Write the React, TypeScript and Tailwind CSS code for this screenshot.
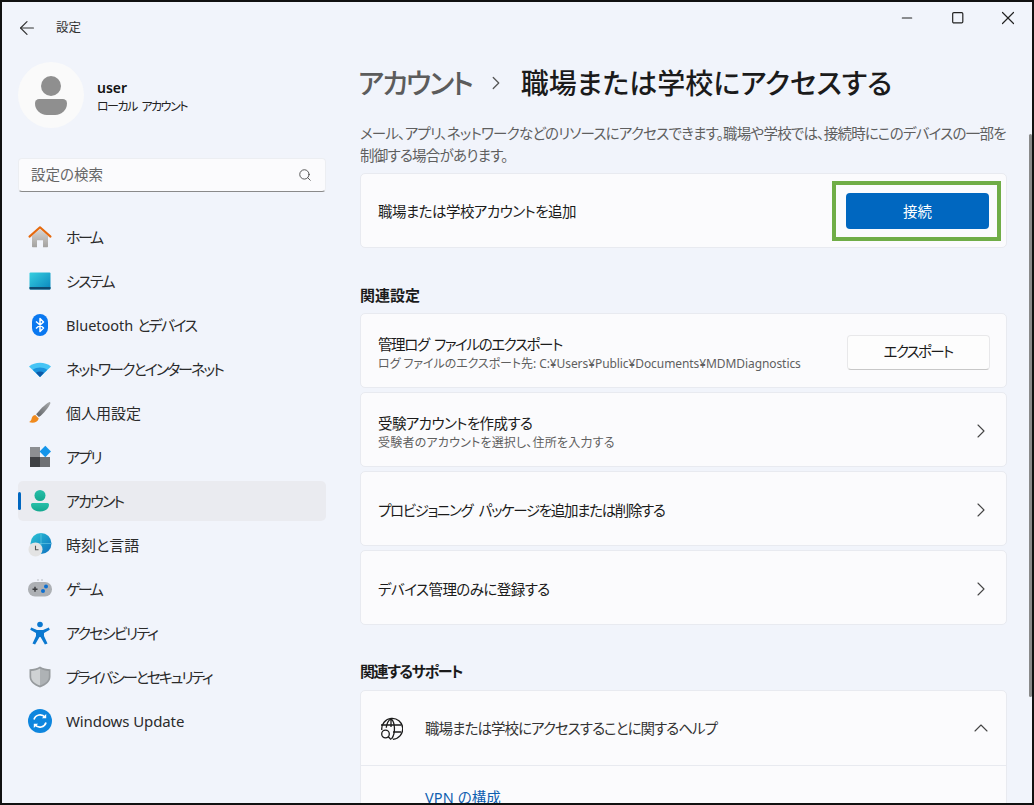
import { ReactNode } from "react"
import { ChevronRight, ChevronUp, Search, ArrowLeft, Minus, Square, X } from "lucide-react"

function HomeIcon() {
  return (
    <svg viewBox="0 0 24 24" className="w-[24px] h-[24px]">
      <defs>
        <linearGradient id="homeBody" x1="0" y1="0" x2="0" y2="1">
          <stop offset="0" stopColor="#d8d6d3" />
          <stop offset="1" stopColor="#a3a19f" />
        </linearGradient>
      </defs>
      <path d="M4 11 12 4l8 7v10.5a.7.7 0 0 1-.7.7H15v-7H9v7H4.700a.7.7 0 0 1-.7-.7z" fill="url(#homeBody)" />
      <path d="M1.500 11.600 12 2.300l10.500 9.300" fill="none" stroke="#e5690d" strokeWidth="2.100" strokeLinecap="round" strokeLinejoin="round" />
    </svg>
  )
}

function SystemIcon() {
  return (
    <svg viewBox="0 0 24 24" className="w-[24px] h-[24px]">
      <defs>
        <linearGradient id="sysScreen" x1="0" y1="0" x2="1" y2="1">
          <stop offset="0" stopColor="#36cfe0" />
          <stop offset="1" stopColor="#0a86bd" />
        </linearGradient>
      </defs>
      <rect x="1.500" y="3.500" width="21" height="17" rx="1" fill="url(#sysScreen)" />
      <path d="M1.500 18h21v1.800a.8.8 0 0 1-.8.8H2.300a.8.8 0 0 1-.8-.8z" fill="#0d4a70" />
    </svg>
  )
}

function BluetoothIcon() {
  return (
    <svg viewBox="0 0 24 24" className="w-[24px] h-[24px]">
      <rect x="4" y="1" width="16" height="22" rx="8" fill="#0a78f0" />
      <path d="M8 8.500 15.500 15 12 18.500v-13L15.500 9 8 15.500" fill="none" stroke="#fff" strokeWidth="1.500" strokeLinejoin="round" />
    </svg>
  )
}

function WifiIcon() {
  return (
    <svg viewBox="0 0 24 24" className="w-[24px] h-[24px]">
      <path d="M1 9.500C7 4.500 17 4.500 23 9.500L12 20z" fill="#46c4f5" />
      <path d="M4.700 12.800C9 9.600 15 9.600 19.300 12.800L12 20z" fill="#1b93dd" />
      <path d="M8 15.700c2.500-1.500 5.500-1.500 8 0L12 20z" fill="#0f5aa8" />
    </svg>
  )
}

function BrushIcon() {
  return (
    <svg viewBox="0 0 24 24" className="w-[24px] h-[24px]">
      <defs>
        <linearGradient id="brushHandle" x1="0" y1="1" x2="1" y2="0">
          <stop offset="0" stopColor="#5d6064" />
          <stop offset="1" stopColor="#a9abad" />
        </linearGradient>
      </defs>
      <path d="M21 1.200c.9-.4 1.600.3 1.300 1.200-1.500 3.600-6.500 10-11.400 13.600l-2.800-2.700C11.500 9 17.400 3 21 1.200z" fill="url(#brushHandle)" />
      <path d="M7.300 14c-2.800.4-3.400 2.300-3.800 4-.3 1.300-1.100 2.300-2.500 3 3.200 1.500 8.300 1.100 9.800-3.400z" fill="#f08a1d" />
    </svg>
  )
}

function AppsIcon() {
  return (
    <svg viewBox="0 0 24 24" className="w-[24px] h-[24px]">
      <rect x="2" y="2" width="10" height="10" fill="#8d8f92" />
      <rect x="2" y="12" width="10" height="10" fill="#3f4144" />
      <rect x="12" y="12" width="10" height="10" fill="#6f7174" />
      <path d="M17.300 .8 23 6.500l-5.700 5.700-5.700-5.700z" fill="#1495ea" />
    </svg>
  )
}

function AccountIcon() {
  return (
    <svg viewBox="0 0 24 24" className="w-[24px] h-[24px]">
      <defs>
        <linearGradient id="acctFill" x1="0" y1="0" x2="0" y2="1">
          <stop offset="0" stopColor="#27bfa9" />
          <stop offset="1" stopColor="#14a88f" />
        </linearGradient>
      </defs>
      <circle cx="12" cy="6.500" r="5.500" fill="url(#acctFill)" />
      <path d="M4.500 14h15a1.500 1.500 0 0 1 1.500 1.500c0 4-3.500 7-9 7s-9-3-9-7A1.500 1.500 0 0 1 4.500 14z" fill="url(#acctFill)" />
    </svg>
  )
}

function TimeIcon() {
  return (
    <svg viewBox="0 0 24 24" className="w-[24px] h-[24px]">
      <defs>
        <linearGradient id="globeFill" x1="0" y1="0" x2="1" y2="1">
          <stop offset="0" stopColor="#2cc5d5" />
          <stop offset="1" stopColor="#0d6fc0" />
        </linearGradient>
      </defs>
      <circle cx="13" cy="10.500" r="10.500" fill="url(#globeFill)" />
      <path d="M13 0v21M2.500 10.500h21" stroke="#7fd6ec" strokeWidth=".5" />
      <circle cx="7.500" cy="16.500" r="7" fill="#e3e3e3" />
      <path d="M7.500 12.800v4h3" fill="none" stroke="#555" strokeWidth="1.100" />
    </svg>
  )
}

function GameIcon() {
  return (
    <svg viewBox="0 0 24 24" className="w-[24px] h-[24px]">
      <rect x="0" y="5" width="24" height="14.500" rx="7" fill="#adb0b4" />
      <path d="M4.500 12.200h5M7 9.700v5" stroke="#3c3d40" strokeWidth="1.500" />
      <circle cx="18" cy="9.500" r="2" fill="#0d6fd0" />
      <circle cx="15" cy="14" r="2" fill="#0d6fd0" />
      <path d="M9.500 3h1M13.500 3h1" stroke="#8a8c8e" strokeWidth="1" />
    </svg>
  )
}

function AccessIcon() {
  return (
    <svg viewBox="0 0 24 24" className="w-[24px] h-[24px]">
      <circle cx="12" cy="3.500" r="2.800" fill="#0b78d0" />
      <path d="M3.200 6.500 9 9h6l5.800-2.500 1 2.300L16 12v3l3.500 7.500-2.600 1L12.500 16h-1l-4.400 7.500-2.600-1L8 15v-3L2.200 8.800z" fill="#0b78d0" />
    </svg>
  )
}

function ShieldIcon() {
  return (
    <svg viewBox="0 0 24 24" className="w-[24px] h-[24px]">
      <path d="M12 1.500c3 1.800 6.500 2.700 10.500 2.800v7.200c0 5-4 8.800-10.500 11C5.500 20.300 1.500 16.500 1.500 11.500V4.300C5.500 4.200 9 3.300 12 1.500z" fill="#979b9e" />
      <path d="M12 3.500c2.500 1.500 5.500 2.200 8.800 2.400v5.600c0 4-3 7-8.800 9z" fill="#aeb2b5" />
      <path d="M12 3.500C9.500 5 6.500 5.700 3.200 5.900v5.600c0 4 3 7 8.800 9z" fill="#cfd2d4" />
    </svg>
  )
}

function UpdateIcon() {
  return (
    <svg viewBox="0 0 24 24" className="w-[24px] h-[24px]">
      <circle cx="12" cy="12" r="12" fill="#0e86de" />
      <path d="M6 10.500a6.300 6.300 0 0 1 11-2.200M18 13.500a6.300 6.300 0 0 1-11 2.200" fill="none" stroke="#fff" strokeWidth="1.700" />
      <path d="M18.200 5v4.300h-4.300zM5.800 19v-4.300h4.300z" fill="#fff" />
    </svg>
  )
}

function HelpGlobeIcon() {
  return (
    <svg viewBox="0 0 24 24" className="w-[24px] h-[24px]" fill="none" stroke="#1b1b1b" strokeWidth="1.300">
      <path d="M2.800 13A10.500 10.500 0 1 1 14 22.300" />
      <path d="M2 8h20M12 1.800V10M12 1.800c-3 2-4.500 5-4.700 9M12 1.800c4 3 5 14 .5 20.300M14 15h8.300" />
      <circle cx="6.500" cy="17" r="3.800" />
      <path d="m9.300 19.800 2.700 2.700" />
    </svg>
  )
}

const navItems: { label: ReactNode; key: string; icon: ReactNode; track?: string; active?: boolean }[] = [
  { key: "home", label: "ホーム", icon: <HomeIcon />, track: "tracking-[-2.4px]" },
  { key: "system", label: "システム", icon: <SystemIcon />, track: "tracking-[-1.7px]" },
  {
    key: "bluetooth",
    label: (
      <>
        <span className="text-[14.5px]">Bluetooth </span>
        <span className="tracking-[-1.7px]">とデバイス</span>
      </>
    ),
    icon: <BluetoothIcon />,
  },
  { key: "network", label: "ネットワークとインターネット", icon: <WifiIcon />, track: "tracking-[-2px]" },
  { key: "personal", label: "個人用設定", icon: <BrushIcon /> },
  { key: "apps", label: "アプリ", icon: <AppsIcon />, track: "tracking-[-1.7px]" },
  { key: "account", label: "アカウント", icon: <AccountIcon />, track: "tracking-[-1.8px]", active: true },
  { key: "time", label: "時刻と言語", icon: <TimeIcon /> },
  { key: "game", label: "ゲーム", icon: <GameIcon />, track: "tracking-[-2.6px]" },
  { key: "access", label: "アクセシビリティ", icon: <AccessIcon />, track: "tracking-[-1.75px]" },
  { key: "privacy", label: "プライバシーとセキュリティ", icon: <ShieldIcon />, track: "tracking-[-2.15px]" },
  { key: "update", label: "Windows Update", icon: <UpdateIcon />, track: "tracking-[-0.1px]" },
]

function Card({ children }: { children: ReactNode }) {
  return (
    <div className="h-[75px] shrink-0 flex items-center justify-between pl-[17px] pr-[18px] bg-[#fbfbfd] border border-[#e8eaf0] rounded-[5px]">
      {children}
    </div>
  )
}

function LinkRow({ title, track, sub, subTrack }: { title: string; track: string; sub?: string; subTrack?: string }) {
  return (
    <Card>
      <div className={sub ? "mt-[4px]" : "mt-[2px]"}>
        <div className={`text-[14.5px] leading-[20px] text-[#1b1b1b] ${track}`}>{title}</div>
        {sub && <div className={`mt-[2px] text-[12px] leading-[16px] text-[#5f5f5f] ${subTrack}`}>{sub}</div>}
      </div>
      <ChevronRight className="w-[24px] h-[24px] text-[#444] mr-[-5px] mt-[2px]" strokeWidth={1.1} />
    </Card>
  )
}

export default function App() {
  return (
    <div className="relative w-[1034px] h-[805px] overflow-hidden flex bg-[#f1f4fb] border-2 border-[#111] font-['Noto_Sans','Noto_Sans_CJK_JP',sans-serif] [font-feature-settings:'palt']">
      {/* Sidebar */}
      <aside className="w-[358px] shrink-0 pl-[16px] pr-[34px]">
        <div className="h-[52px] flex items-center">
          <ArrowLeft className="w-[22px] h-[22px] text-[#333] ml-[-2.5px]" strokeWidth={1.3} />
          <span className="ml-[18.5px] text-[12.5px] text-[#333]">設定</span>
        </div>

        <div className="mt-[8px] flex items-center">
          <div className="w-[66px] h-[66px] rounded-full bg-[#fafafa] flex flex-col items-center justify-center">
            <div className="w-[20px] h-[20px] rounded-full bg-[#8f8f8f]" />
            <div className="w-[32px] h-[16px] mt-[3px] rounded-t-[5px] rounded-b-[14px] bg-[#8f8f8f]" />
          </div>
          <div className="ml-[13px] mt-[5px]">
            <div className="text-[14px] leading-[18px] font-semibold text-[#111]">user</div>
            <div className="text-[12px] leading-[20px] text-[#222] tracking-[-1.5px] [word-spacing:3px]">ローカル アカウント</div>
          </div>
        </div>

        <div className="mt-[30px] h-[34px] flex items-center justify-between pl-[12px] pr-[13px] bg-[#fbfbfd] border border-[#eceef2] border-b-[#8a8a8a] rounded-[4px]">
          <span className="text-[14.5px] text-[#666]">設定の検索</span>
          <Search className="w-[14px] h-[14px] text-[#444]" strokeWidth={1.5} />
        </div>

        <nav className="mt-[25px] flex flex-col gap-[4px]">
          {navItems.map(item => (
            <div
              key={item.key}
              className={`relative h-[40px] flex items-center pl-[10px] rounded-[5px] ${item.active ? "bg-[#eaebf0]" : ""}`}
            >
              {item.active && (
                <div className="absolute left-0 top-[11px] w-[3px] h-[18px] rounded-full bg-[#0067c0]" />
              )}
              <span className="w-[24px] h-[24px] flex items-center justify-center">{item.icon}</span>
              <span className={`ml-[14px] text-[15px] text-[#2b2b2b] ${item.track ?? ""}`}>{item.label}</span>
            </div>
          ))}
        </nav>
      </aside>

      {/* Main */}
      <main className="flex-1 min-w-0 pr-[25px]">
        <div className="h-[32px] flex items-center justify-end text-[#222] mr-[-25px]">
          <div className="w-[50px] flex justify-center"><Minus className="w-[16px] h-[16px]" strokeWidth={1.8} /></div>
          <div className="w-[50px] flex justify-center"><Square className="w-[13.5px] h-[13.5px] ml-[2px]" strokeWidth={2.1} /></div>
          <div className="w-[50px] flex justify-center"><X className="w-[22px] h-[22px] ml-[2px]" strokeWidth={1.3} /></div>
        </div>

        <h1 className="mt-[29px] h-[40px] flex items-center text-[28px] leading-[40px] font-medium text-[#1b1b1b]">
          <span className="ml-[-2px] text-[#5c5c5c] tracking-[-2px]">アカウント</span>
          <ChevronRight className="w-[22px] h-[22px] mx-[13.5px] text-[#555]" strokeWidth={1.4} />
          <span>職場または学校にアクセスする</span>
        </h1>

        <p className="mt-[19px] text-[14.5px] leading-[22px] text-[#5f5f5f] tracking-[-0.76px]">
          メール、アプリ、ネットワークなどのリソースにアクセスできます。職場や学校では、接続時にこのデバイスの一部を制御する場合があります。
        </p>

        <div className="mt-[7px]">
          <Card>
            <span className="mt-[2px] text-[14.5px] text-[#1b1b1b] tracking-[-0.55px]">職場または学校アカウントを追加</span>
            <div className="border-[4px] border-[#70ad47] mr-[-13px] mt-[1px] pl-[10px] pr-[8px] py-[8px]">
              <div className="w-[143px] h-[36px] pt-[2px] flex items-center justify-center rounded-[4px] bg-[#0067c0] text-[14.5px] text-white">
                接続
              </div>
            </div>
          </Card>
        </div>

        <h2 className="mt-[37px] h-[20px] text-[15px] leading-[20px] font-semibold text-[#1b1b1b]">関連設定</h2>
        <div className="mt-[8px] flex flex-col gap-[4.1px]">
          <Card>
            <div className="mt-[4px]">
              <div className="text-[14.5px] leading-[20px] text-[#1b1b1b] tracking-[-1.4px] [word-spacing:3px]">管理ログ ファイルのエクスポート</div>
              <div className="mt-[2px] text-[12px] leading-[16px] text-[#5f5f5f] tracking-[-0.08px]">ログ ファイルのエクスポート先: C:¥Users¥Public¥Documents¥MDMDiagnostics</div>
            </div>
            <div className="w-[143px] h-[35px] mr-[-1.5px] mt-[3px] flex items-center justify-center rounded-[4px] bg-[#fdfdfd] border border-[#e8e8ea] border-b-[#c8c8c8] text-[14.5px] text-[#1b1b1b] tracking-[-1.7px]">
              エクスポート
            </div>
          </Card>
          <LinkRow
            title="受験アカウントを作成する"
            track="tracking-[-0.6px]"
            sub="受験者のアカウントを選択し、住所を入力する"
            subTrack="tracking-[0.2px]"
          />
          <LinkRow title="プロビジョニング パッケージを追加または削除する" track="tracking-[-1.35px] [word-spacing:4px]" />
          <LinkRow title="デバイス管理のみに登録する" track="tracking-[-0.55px]" />
        </div>

        <h2 className="mt-[36px] h-[20px] text-[15px] leading-[20px] font-semibold text-[#1b1b1b] tracking-[-1.4px]">関連するサポート</h2>
        <div className="mt-[9px] bg-[#fbfbfd] border border-[#e8eaf0] rounded-[5px]">
          <div className="h-[75px] flex items-center justify-between pl-[18px] pr-[18px] border-b border-[#e8eaf0]">
            <div className="flex items-center mt-[2px]">
              <HelpGlobeIcon />
              <span className="ml-[22px] text-[14.5px] text-[#333] tracking-[-0.95px]">職場または学校にアクセスすることに関するヘルプ</span>
            </div>
            <ChevronUp className="w-[24px] h-[24px] text-[#444] mr-[-5px]" strokeWidth={1.1} />
          </div>
          <div className="h-[60px] pt-[20px] pl-[64px] text-[14.5px] leading-[22px] text-[#0f5fb0] tracking-[0.1px]">VPN の構成</div>
        </div>
      </main>

      {/* Scrollbar thumb */}
      <div className="absolute right-[0.5px] top-[132px] w-[2.5px] h-[563px] rounded-full bg-[#8a8a8a]" />
    </div>
  )
}
